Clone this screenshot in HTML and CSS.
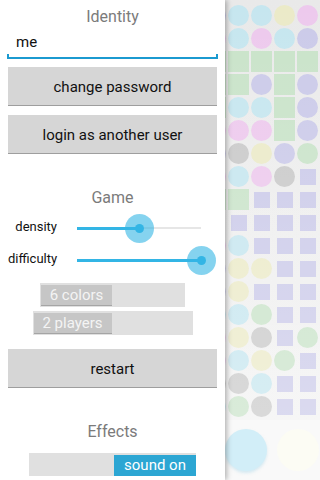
FILE: index.html
```html
<!DOCTYPE html>
<html lang="en">
<head>
  <meta charset="UTF-8" />
  <meta name="viewport" content="width=device-width, initial-scale=1.0"/>
  <title>Settings</title>
  <link rel="stylesheet" href="styles.css">
</head>
<body>

  <!-- settings drawer -->
  <div class="drawer">
    <h2 class="title first">Identity</h2>
    <div class="field">
      <input type="text" value="me">
    </div>
    <button class="btn">change password</button>
    <button class="btn second">login as another user</button>

    <h2 class="title game">Game</h2>
    <div class="setting top">
      <span class="label">density</span>
      <div class="slider">
        <div class="track"></div>
        <div class="fill" style="width: 50%"></div>
        <div class="thumb" style="left: 50%"></div>
      </div>
    </div>
    <div class="setting">
      <span class="label">difficulty</span>
      <div class="slider">
        <div class="track"></div>
        <div class="fill" style="width: 100%"></div>
        <div class="thumb" style="left: 100%"></div>
      </div>
    </div>
    <div class="toggle colors"><span class="on">6 colors</span></div>
    <div class="toggle players"><span class="on">2 players</span></div>

    <button class="btn restart">restart</button>

    <h2 class="title effects">Effects</h2>
    <div class="toggle sound"><span class="on">sound on</span></div>
  </div>

  <!-- game board behind the drawer -->
  <div class="board">
    <div id="grid" class="grid"></div>
    <div class="footer">
      <span class="bubble cyan"></span>
      <span class="bubble cream"></span>
    </div>
  </div>

  <script>
    // c = dot, g = block, s = small square; second letter is the colour
    const rows = [
      "cV cC cC cY cP",
      "cP cC cP cC cV",
      "gG gG gG gG gG",
      "gG gG cV gG cV",
      "gG cC cC gG cV",
      "cP cP cP gG cV",
      "cV cK cY cV cG",
      "cP cC cP cK sV",
      "gG gG sV sV sV",
      "sV sV sV sV sV",
      "cP cC sV sV sV",
      "cV cY cY sV sV",
      "cV cY sV sV sV",
      "cC cC cG sV sV",
      "cP cY cK sV cG",
      "cP cC cY cG sV",
      "cK cK cC sV sV",
      "cC cG cK sV sV"
    ];
    const shapes = { c: "dot", g: "block", s: "mini" };
    const colors = { C: "cyan", P: "pink", Y: "yellow", V: "violet", G: "green", K: "gray" };

    const grid = document.getElementById('grid');
    rows.forEach(row => {
      row.split(" ").forEach(code => {
        const cell = document.createElement('div');
        cell.className = "cell";
        const piece = document.createElement('span');
        piece.className = shapes[code[0]] + " " + colors[code[1]];
        cell.appendChild(piece);
        grid.appendChild(cell);
      });
    });
  </script>
</body>
</html>
```

FILE: styles.css
```css
* { box-sizing: border-box; }
body {
  margin: 0;
  width: 320px;
  height: 480px;
  overflow: hidden;
  display: flex;
  font-family: Roboto, "Liberation Sans", sans-serif;
  background: #f8f8f8;
}

/* drawer */
.drawer {
  flex: 0 0 225px;
  height: 480px;
  padding: 0 8px;
  background: #fff;
  display: flex;
  flex-direction: column;
  position: relative;
  z-index: 2;
  box-shadow: 2px 0 5px rgba(0, 0, 0, 0.28);
}
.title {
  margin: 0;
  font-size: 16px;
  font-weight: normal;
  line-height: 20px;
  color: #7b7b7b;
  text-align: center;
}
.title.first { margin-top: 7px; }
.title.game { margin-top: 34px; }
.title.effects { margin-top: 34px; }

.field {
  margin: 0 -1px;
  height: 32px;
  border-bottom: 2px solid #1b9ad0;
  background:
    linear-gradient(#1b9ad0, #1b9ad0) left bottom / 2px 3px no-repeat,
    linear-gradient(#1b9ad0, #1b9ad0) right bottom / 2px 3px no-repeat;
}
.field input {
  width: 100%;
  height: 100%;
  border: 0;
  outline: none;
  background: transparent;
  padding: 0 0 1px 9px;
  font-family: inherit;
  font-size: 15px;
  color: #111;
}

.btn {
  display: block;
  width: 100%;
  height: 39px;
  margin-top: 8px;
  border: 0;
  border-bottom: 1px solid #9e9e9e;
  background: #d6d6d6;
  font-family: inherit;
  font-size: 15px;
  color: #111;
  padding: 2px 0 0;
}
.btn.second { margin-top: 9px; }
.btn.restart { margin-top: 14px; }

/* sliders */
.setting {
  display: flex;
  align-items: center;
  height: 32px;
}
.setting.top { margin-top: 4px; }
.label {
  width: 49px;
  padding-bottom: 3px;
  text-align: right;
  font-size: 13px;
  color: #111;
}
.slider {
  position: relative;
  width: 124px;
  height: 32px;
  margin-left: 20px;
}
.track, .fill {
  position: absolute;
  left: 0;
  top: 15px;
  height: 2px;
}
.track { width: 100%; background: #e6e6e6; }
.fill { height: 3px; background: #33b5e5; }
.thumb {
  position: absolute;
  top: 2px;
  width: 29px;
  height: 29px;
  margin-left: -14px;
  border-radius: 50%;
  background: rgba(51, 181, 229, 0.6);
}
.thumb::after {
  content: "";
  position: absolute;
  left: 10px;
  top: 10px;
  width: 9px;
  height: 9px;
  border-radius: 50%;
  background: #33b5e5;
}

/* toggles */
.toggle {
  display: flex;
  margin: 0 auto;
  height: 24px;
  padding: 2px 0 1px 1px;
  background: #e0e0e0;
}
.toggle .on {
  background: #c6c6c6;
  border-bottom: 1px solid #a5a5a5;
  color: #f4f4f4;
  font-size: 15px;
  line-height: 21px;
  text-align: center;
}
.toggle.colors { width: 145px; margin-top: 7px; }
.toggle.colors .on { width: 71px; }
.toggle.players { width: 160px; margin-top: 4px; }
.toggle.players .on { width: 78px; }
.toggle.sound {
  width: 167px;
  height: 23px;
  margin-top: 11px;
  padding: 2px 0 0;
  justify-content: flex-end;
}
.toggle.sound .on {
  width: 82px;
  background: #2ca6d3;
  border: 0;
  color: #fff;
}

/* board */
.board {
  flex: 0 0 116px;
  margin-left: -21px;
  height: 480px;
  display: flex;
  flex-direction: column;
}
.grid {
  position: relative;
  height: 420px;
  padding-top: 4px;
  display: grid;
  grid-template-columns: repeat(5, 23px);
  grid-auto-rows: 23px;
  background: linear-gradient(#e9e9e9, #f2f2f2);
}
.grid::after {
  content: "";
  position: absolute;
  inset: 0;
  background: linear-gradient(rgba(255, 255, 255, 0), rgba(255, 255, 255, 0.3));
}
.cell { display: grid; place-items: center; }
.dot { width: 21px; height: 21px; border-radius: 50%; }
.block { width: 21px; height: 21px; }
.mini { width: 16px; height: 16px; }

.cyan { background: #c6e6ef; }
.pink { background: #edc9ed; }
.yellow { background: #ebeac8; }
.violet { background: #cbcae9; }
.green { background: #c9e3c9; }
.gray { background: #c9c9c9; }

.footer {
  height: 60px;
  display: flex;
  align-items: center;
  gap: 10px;
  padding-left: 21px;
  background: #f9f9f9;
  box-shadow: 0 -2px 3px rgba(0, 0, 0, 0.06);
}
.bubble {
  flex: 0 0 42px;
  height: 42px;
  border-radius: 50%;
}
.bubble.cyan { background: #d2eef8; box-shadow: 0 2px 3px rgba(180, 220, 235, 0.5); }
.bubble.cream { background: #fcfcf4; }
```
